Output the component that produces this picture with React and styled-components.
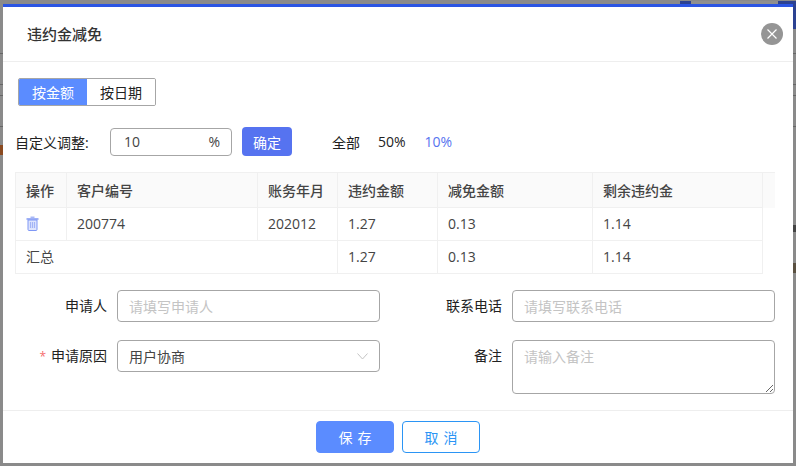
import React from "react";
import styled, { createGlobalStyle } from "styled-components";

const GlobalStyle = createGlobalStyle`
  html, body {
    margin: 0;
    padding: 0;
    background: #8a8a8a;
    overflow: hidden;
  }
  * {
    box-sizing: border-box;
  }
`;

const font = `"Open Sans", "Noto Sans CJK SC", sans-serif`;

const Overlay = styled.div`
  position: relative;
  width: 796px;
  height: 466px;
  padding: 4px 3px 3px;
  background: #8a8a8a;
  font-family: ${font};
  font-size: 14px;
  color: #303133;
`;

// page behind the mask, only slivers of it show around the modal
const BackdropBar = styled.div`
  position: absolute;
  top: ${({ $top }) => $top}px;
  left: ${({ $left }) => $left}px;
  width: ${({ $w }) => $w}px;
  height: ${({ $h }) => $h}px;
  background: ${({ $color }) => $color};
`;

const Modal = styled.div`
  position: relative;
  height: 459px;
  background: #fff;
  border-top: 3px solid #2b55e3;
  display: flex;
  flex-direction: column;
`;

const Header = styled.div`
  height: 55px;
  flex-shrink: 0;
  padding: 0 10px 1px 24px;
  border-bottom: 1px solid #eeeeee;
  display: flex;
  align-items: center;
  justify-content: space-between;
`;

const Title = styled.div`
  font-size: 15px;
  font-weight: 500;
  color: #333;
`;

const CloseButton = styled.div`
  width: 22px;
  height: 22px;
  border-radius: 50%;
  background: #959595;
  display: flex;
  align-items: center;
  justify-content: center;
`;

const Body = styled.div`
  flex: 1;
  padding: 16px 18px 0 12px;
`;

const Segment = styled.div`
  display: inline-flex;
  height: 28px;
  margin-left: 3px;
  border: 1px solid #a6a6a6;
  border-radius: 2px;
  overflow: hidden;
`;

const SegmentItem = styled.div`
  width: 68px;
  display: flex;
  align-items: center;
  justify-content: center;
  background: ${({ $active }) => ($active ? "#5b8cff" : "#fff")};
  color: ${({ $active }) => ($active ? "#fff" : "#222")};
`;

const AdjustRow = styled.div`
  display: flex;
  align-items: center;
  height: 29px;
  margin-top: 21px;
`;

const AdjustLabel = styled.div`
  width: 95px;
  color: #222;
`;

const PercentInput = styled.div`
  width: 122px;
  height: 28px;
  padding: 0 11px 0 13px;
  border: 1px solid #a6a6a6;
  border-radius: 4px;
  display: flex;
  align-items: center;
  justify-content: space-between;
  color: #444;
`;

const ConfirmButton = styled.div`
  width: 50px;
  height: 29px;
  margin-left: 10px;
  border-radius: 4px;
  background: #5673f0;
  color: #fff;
  font-size: 14px;
  display: flex;
  align-items: center;
  justify-content: center;
`;

const Quick = styled.div`
  margin-left: ${({ $gap }) => $gap}px;
  color: ${({ $active }) => ($active ? "#5673f0" : "#222")};
`;

const Table = styled.table`
  width: 759px;
  margin-top: 16px;
  border-collapse: collapse;
  table-layout: fixed;
`;

const Th = styled.th`
  height: 35px;
  padding: 0 10px;
  background: #fafafa;
  border: 1px solid #f0f0f0;
  font-weight: 500;
  font-size: 14px;
  text-align: left;
  color: #444;
`;

const GutterTh = styled.th`
  background: #fafafa;
  border-top: 1px solid #f0f0f0;
`;

const Td = styled.td`
  height: 33px;
  padding: 0 10px 2px;
  border: 1px solid #f0f0f0;
  color: #444;
`;

const IconCell = styled(Td)`
  padding: 3px 10px 0;
`;

const Form = styled.div`
  margin-top: 16px;
  padding-left: 102px;
  display: grid;
  grid-template-columns: 263px 263px;
  column-gap: 132px;
  row-gap: 18px;
`;

const Field = styled.div`
  position: relative;
  display: flex;
  align-items: flex-start;
`;

// sits in the gutter left of its control
const Label = styled.label`
  position: absolute;
  right: calc(100% + 10px);
  top: 5px;
  white-space: nowrap;
  color: #222;
`;

const Star = styled.span`
  color: #f56c6c;
  margin-right: 5px;
  font-size: 12px;
`;

const TextInput = styled.input`
  width: 100%;
  height: 32px;
  padding: 0 11px;
  border: 1px solid #a6a6a6;
  border-radius: 4px;
  outline: none;
  font: inherit;
  color: #444;
  &::placeholder {
    color: #c4c4c4;
  }
`;

const Select = styled.div`
  width: 100%;
  height: 32px;
  padding: 0 11px;
  border: 1px solid #a6a6a6;
  border-radius: 4px;
  display: flex;
  align-items: center;
  justify-content: space-between;
  color: #444;
`;

const TextArea = styled.textarea`
  display: block;
  width: 100%;
  height: 54px;
  padding: 5px 11px;
  border: 1px solid #a6a6a6;
  border-radius: 4px;
  outline: none;
  font: inherit;
  color: #444;
  &::placeholder {
    color: #c4c4c4;
  }
`;

const Footer = styled.div`
  height: 53px;
  flex-shrink: 0;
  padding-top: 10px;
  border-top: 1px solid #eeeeee;
  display: flex;
  justify-content: center;
  gap: 8px;
`;

const FooterButton = styled.div`
  width: 78px;
  height: 32px;
  padding-left: 5px;
  border-radius: 4px;
  border: 1px solid ${({ $primary }) => ($primary ? "#5b8cff" : "#2b95f5")};
  background: ${({ $primary }) => ($primary ? "#5b8cff" : "#fff")};
  color: ${({ $primary }) => ($primary ? "#fff" : "#2b95f5")};
  letter-spacing: 5px;
  display: flex;
  align-items: center;
  justify-content: center;
`;

const TrashIcon = () => (
  <svg width="13" height="15" viewBox="0 0 13 15">
    <rect x="4.5" y="0.5" width="4" height="2" fill="#a9b9f7" />
    <rect x="0.5" y="2" width="12" height="2" fill="#9fb1f6" />
    <path d="M2 4h9v9.5a1 1 0 0 1-1 1H3a1 1 0 0 1-1-1z" fill="#dfe5fd" stroke="#7f97f5" strokeWidth="1" />
    <path d="M4.5 6v6M6.5 6v6M8.5 6v6" stroke="#a3b4f6" strokeWidth="1.2" />
  </svg>
);

const CloseIcon = () => (
  <svg width="12" height="12" viewBox="0 0 12 12">
    <path d="M1.5 1.5l9 9M10.5 1.5l-9 9" stroke="#fff" strokeWidth="1.2" fill="none" />
  </svg>
);

const ChevronIcon = () => (
  <svg width="11" height="7" viewBox="0 0 11 7">
    <path d="M0.5 0.5l5 5.5 5-5.5" stroke="#c4c4c4" strokeWidth="1" fill="none" />
  </svg>
);

const columns = [51, 191, 80, 100, 155, 170, 12];
const headers = ["操作", "客户编号", "账务年月", "违约金额", "减免金额", "剩余违约金"];

const backdrop = [
  { top: 1, left: 691, w: 87, h: 3, color: "#8f8f8f" },
  { top: 1, left: 680, w: 11, h: 3, color: "#2c4292" },
  { top: 1, left: 778, w: 18, h: 3, color: "#2c4292" },
  { top: 4, left: 793, w: 3, h: 25, color: "#2c4292" },
  { top: 53, left: 0, w: 3, h: 1, color: "#666" },
  { top: 84, left: 0, w: 3, h: 1, color: "#666" },
  { top: 95, left: 0, w: 3, h: 1, color: "#666" },
  { top: 126, left: 0, w: 3, h: 1, color: "#666" },
  { top: 145, left: 0, w: 3, h: 10, color: "#8a4a20" },
  { top: 53, left: 793, w: 3, h: 1, color: "#666" },
  { top: 84, left: 793, w: 3, h: 1, color: "#666" },
  { top: 95, left: 793, w: 3, h: 1, color: "#666" },
  { top: 126, left: 793, w: 3, h: 1, color: "#666" },
  { top: 225, left: 793, w: 3, h: 7, color: "#444" },
  { top: 263, left: 793, w: 3, h: 10, color: "#5a5040" },
];

export default function App() {
  return (
    <>
      <GlobalStyle />
      <Overlay>
        {backdrop.map((b, i) => (
          <BackdropBar key={i} $top={b.top} $left={b.left} $w={b.w} $h={b.h} $color={b.color} />
        ))}
        <Modal>
          <Header>
            <Title>违约金减免</Title>
            <CloseButton>
              <CloseIcon />
            </CloseButton>
          </Header>
          <Body>
            <Segment>
              <SegmentItem $active>按金额</SegmentItem>
              <SegmentItem>按日期</SegmentItem>
            </Segment>
            <AdjustRow>
              <AdjustLabel>自定义调整:</AdjustLabel>
              <PercentInput>
                <span>10</span>
                <span>%</span>
              </PercentInput>
              <ConfirmButton>确定</ConfirmButton>
              <Quick $gap={40}>全部</Quick>
              <Quick $gap={18}>50%</Quick>
              <Quick $gap={19} $active>
                10%
              </Quick>
            </AdjustRow>
            <Table>
              <colgroup>
                {columns.map((w, i) => (
                  <col key={i} width={w} />
                ))}
              </colgroup>
              <thead>
                <tr>
                  {headers.map((h) => (
                    <Th key={h}>{h}</Th>
                  ))}
                  <GutterTh />
                </tr>
              </thead>
              <tbody>
                <tr>
                  <IconCell>
                    <TrashIcon />
                  </IconCell>
                  <Td>200774</Td>
                  <Td>202012</Td>
                  <Td>1.27</Td>
                  <Td>0.13</Td>
                  <Td>1.14</Td>
                </tr>
                <tr>
                  <Td colSpan={3}>汇总</Td>
                  <Td>1.27</Td>
                  <Td>0.13</Td>
                  <Td>1.14</Td>
                </tr>
              </tbody>
            </Table>
            <Form>
              <Field>
                <Label>申请人</Label>
                <TextInput placeholder="请填写申请人" />
              </Field>
              <Field>
                <Label>联系电话</Label>
                <TextInput placeholder="请填写联系电话" />
              </Field>
              <Field>
                <Label>
                  <Star>*</Star>申请原因
                </Label>
                <Select>
                  <span>用户协商</span>
                  <ChevronIcon />
                </Select>
              </Field>
              <Field>
                <Label>备注</Label>
                <TextArea placeholder="请输入备注" />
              </Field>
            </Form>
          </Body>
          <Footer>
            <FooterButton $primary>保存</FooterButton>
            <FooterButton>取消</FooterButton>
          </Footer>
        </Modal>
      </Overlay>
    </>
  );
}
